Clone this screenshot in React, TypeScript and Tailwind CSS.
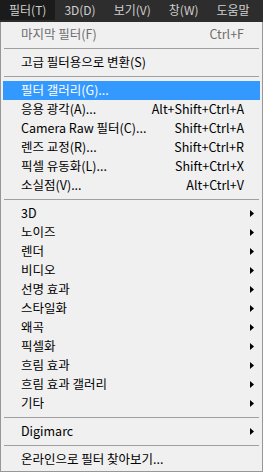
import React from "react";

type Row =
  | { kind: "item"; label: string; shortcut?: string; sub?: boolean; disabled?: boolean; active?: boolean }
  | { kind: "sep" };

const rows: Row[] = [
  { kind: "item", label: "마지막 필터(F)", shortcut: "Ctrl+F", disabled: true },
  { kind: "sep" },
  { kind: "item", label: "고급 필터용으로 변환(S)" },
  { kind: "sep" },
  { kind: "item", label: "필터 갤러리(G)...", active: true },
  { kind: "item", label: "응용 광각(A)...", shortcut: "Alt+Shift+Ctrl+A" },
  { kind: "item", label: "Camera Raw 필터(C)...", shortcut: "Shift+Ctrl+A" },
  { kind: "item", label: "렌즈 교정(R)...", shortcut: "Shift+Ctrl+R" },
  { kind: "item", label: "픽셀 유동화(L)...", shortcut: "Shift+Ctrl+X" },
  { kind: "item", label: "소실점(V)...", shortcut: "Alt+Ctrl+V" },
  { kind: "sep" },
  { kind: "item", label: "3D", sub: true },
  { kind: "item", label: "노이즈", sub: true },
  { kind: "item", label: "렌더", sub: true },
  { kind: "item", label: "비디오", sub: true },
  { kind: "item", label: "선명 효과", sub: true },
  { kind: "item", label: "스타일화", sub: true },
  { kind: "item", label: "왜곡", sub: true },
  { kind: "item", label: "픽셀화", sub: true },
  { kind: "item", label: "흐림 효과", sub: true },
  { kind: "item", label: "흐림 효과 갤러리", sub: true },
  { kind: "item", label: "기타", sub: true },
  { kind: "sep" },
  { kind: "item", label: "Digimarc", sub: true },
  { kind: "sep" },
  { kind: "item", label: "온라인으로 필터 찾아보기..." },
];

const menus = ["필터(T)", "3D(D)", "보기(V)", "창(W)", "도움말"];

function Arrow() {
  return (
    <svg width="4" height="7" viewBox="0 0 4 7" className="shrink-0">
      <polygon points="0,0 4,3.5 0,7" fill="#000" />
    </svg>
  );
}

export default function App() {
  return (
    <div
      className="flex h-[473px] w-[263px] flex-col overflow-hidden bg-white text-[12.5px]"
      style={{ fontFamily: '"Noto Sans CJK KR", "Noto Sans", sans-serif' }}
    >
      {/* Menu bar */}
      <div className="flex h-[22px] shrink-0 items-start bg-[#2d2d2d] text-[12px] text-[#cfcfcf]">
        {menus.map((m, i) => (
          <div
            key={m}
            className={
              i === 0
                ? "flex h-[20px] items-center whitespace-nowrap bg-[#1b1b1b] px-[9px]"
                : "flex h-[20px] items-center whitespace-nowrap px-[9px]"
            }
          >
            {m}
          </div>
        ))}
      </div>

      {/* Dropdown */}
      <div className="flex flex-col border-x border-b border-[#979797] bg-[#f0f0f0] pt-[3px] pb-[2px]">
        {rows.map((r, i) =>
          r.kind === "sep" ? (
            <div key={i} className="mx-[3px] h-[9px] pt-[4px]">
              <div className="h-px bg-[#a0a0a0]" />
            </div>
          ) : (
            <div
              key={i}
              className={
                r.active
                  ? "mx-[2px] flex h-[19px] items-center bg-[#3399ff] pl-[18px] pr-[6px] text-white"
                  : r.disabled
                    ? "mx-[2px] flex h-[19px] items-center pl-[18px] pr-[6px] text-[#6d6d6d]"
                    : "mx-[2px] flex h-[19px] items-center pl-[18px] pr-[6px] text-black"
              }
            >
              <span className="flex-1 whitespace-nowrap">{r.label}</span>
              {r.shortcut && <span className="mr-[10px] whitespace-nowrap">{r.shortcut}</span>}
              {r.sub && <Arrow />}
            </div>
          )
        )}
      </div>
    </div>
  );
}
